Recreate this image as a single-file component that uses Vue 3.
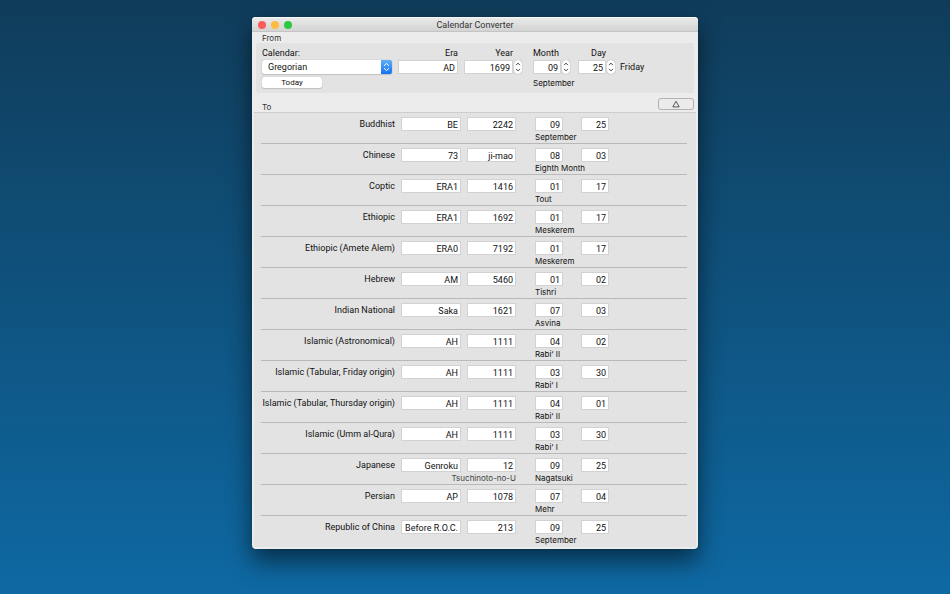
<script setup>
import { computed, ref } from 'vue'

const calendars = ['Gregorian', 'Buddhist', 'Chinese', 'Coptic', 'Hebrew', 'Japanese', 'Persian']
const monthNames = [
  'January', 'February', 'March', 'April', 'May', 'June',
  'July', 'August', 'September', 'October', 'November', 'December',
]
const dayNames = ['Sunday', 'Monday', 'Tuesday', 'Wednesday', 'Thursday', 'Friday', 'Saturday']

const calendar = ref('Gregorian')
const date = ref(new Date(Date.UTC(1699, 8, 25)))

const two = (n) => String(n).padStart(2, '0')
const parts = computed(() => [
  { key: 'year', label: 'Year', value: String(date.value.getUTCFullYear()), note: '' },
  {
    key: 'month',
    label: 'Month',
    value: two(date.value.getUTCMonth() + 1),
    note: monthNames[date.value.getUTCMonth()],
  },
  { key: 'day', label: 'Day', value: two(date.value.getUTCDate()), note: '' },
])
const weekday = computed(() => dayNames[date.value.getUTCDay()])

function step(key, by) {
  const next = new Date(date.value)
  if (key === 'year') next.setUTCFullYear(next.getUTCFullYear() + by)
  if (key === 'month') next.setUTCMonth(next.getUTCMonth() + by)
  if (key === 'day') next.setUTCDate(next.getUTCDate() + by)
  date.value = next
}

function today() {
  date.value = new Date()
}

const expanded = ref(true)

const row = (name, era, year, month, day, monthName, yearName = '') => ({
  name, era, year, month, day, monthName, yearName,
})
const rows = [
  row('Buddhist', 'BE', '2242', '09', '25', 'September'),
  row('Chinese', '73', 'ji-mao', '08', '03', 'Eighth Month'),
  row('Coptic', 'ERA1', '1416', '01', '17', 'Tout'),
  row('Ethiopic', 'ERA1', '1692', '01', '17', 'Meskerem'),
  row('Ethiopic (Amete Alem)', 'ERA0', '7192', '01', '17', 'Meskerem'),
  row('Hebrew', 'AM', '5460', '01', '02', 'Tishri'),
  row('Indian National', 'Saka', '1621', '07', '03', 'Asvina'),
  row('Islamic (Astronomical)', 'AH', '1111', '04', '02', 'Rabiʻ II'),
  row('Islamic (Tabular, Friday origin)', 'AH', '1111', '03', '30', 'Rabiʻ I'),
  row('Islamic (Tabular, Thursday origin)', 'AH', '1111', '04', '01', 'Rabiʻ II'),
  row('Islamic (Umm al-Qura)', 'AH', '1111', '03', '30', 'Rabiʻ I'),
  row('Japanese', 'Genroku', '12', '09', '25', 'Nagatsuki', 'Tsuchinoto-no-U'),
  row('Persian', 'AP', '1078', '07', '04', 'Mehr'),
  row('Republic of China', 'Before R.O.C.', '213', '09', '25', 'September'),
]
</script>

<template>
  <main class="desktop">
    <div class="window">
      <header class="titlebar">
        <div class="lights">
          <button class="light close" aria-label="Close"></button>
          <button class="light minimize" aria-label="Minimize"></button>
          <button class="light zoom" aria-label="Zoom"></button>
        </div>
        <h1 class="title">Calendar Converter</h1>
      </header>

      <section>
        <h2 class="caption">From</h2>
        <div class="source">
          <div class="column">
            <label class="label" for="calendar">Calendar:</label>
            <div class="picker">
              <select id="calendar" v-model="calendar" class="select">
                <option v-for="name in calendars" :key="name">{{ name }}</option>
              </select>
              <span class="picker-knob">
                <svg viewBox="0 0 11 14" width="11" height="14" aria-hidden="true">
                  <path d="M3.4 5.6 5.5 3.3 7.6 5.6M3.4 8.4 5.5 10.7 7.6 8.4" />
                </svg>
              </span>
            </div>
            <button class="today" @click="today">Today</button>
          </div>

          <div class="column">
            <label class="label era-label" for="era">Era</label>
            <input id="era" class="field era" value="AD" />
          </div>

          <div v-for="part in parts" :key="part.key" class="column">
            <label class="label" :class="part.key + '-label'" :for="part.key">{{ part.label }}</label>
            <div class="stepped">
              <input :id="part.key" class="field" :class="part.key" :value="part.value" />
              <span class="stepper">
                <button :aria-label="'Increase ' + part.label" @click="step(part.key, 1)">
                  <svg viewBox="0 0 8 7" width="8" height="7" aria-hidden="true">
                    <path d="M2.3 4.9 4 3.1 5.7 4.9" />
                  </svg>
                </button>
                <button :aria-label="'Decrease ' + part.label" @click="step(part.key, -1)">
                  <svg viewBox="0 0 8 7" width="8" height="7" aria-hidden="true">
                    <path d="M2.3 2.1 4 3.9 5.7 2.1" />
                  </svg>
                </button>
              </span>
            </div>
            <span class="source-note">{{ part.note }}</span>
          </div>

          <output class="weekday">{{ weekday }}</output>
        </div>
      </section>

      <section>
        <div class="target-head">
          <h2 class="caption">To</h2>
          <button class="toggle" aria-label="Collapse list" @click="expanded = !expanded">
            <svg viewBox="0 0 8 8" width="8" height="8" aria-hidden="true">
              <path d="M4 1.2 7.2 6.9H.8Z" />
            </svg>
          </button>
        </div>
        <table v-show="expanded" class="results">
          <tbody>
            <tr v-for="r in rows" :key="r.name" class="result">
              <th scope="row" class="name">{{ r.name }}</th>
              <td><input class="field era" readonly :value="r.era" :aria-label="r.name + ' era'" /></td>
              <td>
                <input class="field year" readonly :value="r.year" :aria-label="r.name + ' year'" />
                <span class="note year-note">{{ r.yearName }}</span>
              </td>
              <td>
                <input class="field month" readonly :value="r.month" :aria-label="r.name + ' month'" />
                <span class="note">{{ r.monthName }}</span>
              </td>
              <td><input class="field day" readonly :value="r.day" :aria-label="r.name + ' day'" /></td>
            </tr>
          </tbody>
        </table>
      </section>
    </div>
  </main>
</template>

<style>
body {
  margin: 0;
}
</style>

<style scoped>
* {
  box-sizing: border-box;
}

.desktop {
  min-height: 100vh;
  padding: 17px 16px 45px;
  background: linear-gradient(#103c5a, #0e69a3);
  font: 9px/14px Roboto, 'Liberation Sans', sans-serif;
  color: #111;
}

.window {
  max-width: 446px;
  margin: 0 auto;
  padding-bottom: 2px;
  border-radius: 4px;
  background: #ececec;
  box-shadow: 0 0 1px rgba(0, 0, 0, 0.5), 0 12px 24px rgba(0, 0, 0, 0.55);
}

button,
input,
select {
  margin: 0;
  padding: 0;
  border: 0;
  font: inherit;
  color: inherit;
}

/* Title bar */
.titlebar {
  display: grid;
  grid-template-columns: 1fr auto 1fr;
  align-items: center;
  height: 15px;
  padding: 1px 6px 0;
  border-bottom: 1px solid #c4c4c4;
  border-radius: 4px 4px 0 0;
  background: linear-gradient(#ebebeb, #d3d3d3);
  box-shadow: inset 0 1px #f6f6f6;
}

.lights {
  display: flex;
  gap: 5px;
}

.light {
  width: 8px;
  height: 8px;
  border-radius: 50%;
}

.close {
  background: #fc5b57;
}

.minimize {
  background: #fdbc40;
}

.zoom {
  background: #2bc840;
}

.title {
  margin: 0;
  font-size: 9px;
  font-weight: 400;
  color: #333;
}

.caption {
  margin: 0;
  padding: 2px 0 0 10px;
  font: 8px/9px Inter, 'Liberation Sans', sans-serif;
  color: #333;
}

/* Source date */
.source {
  display: grid;
  grid-template-columns: 130px 60px 63px 39px 36px 1fr;
  column-gap: 6px;
  margin: 0 4px;
  padding: 3px 6px 4px;
  border-radius: 2px;
  background: #e3e3e3;
}

.column {
  display: flex;
  flex-direction: column;
  align-items: flex-start;
}

.label {
  height: 14px;
  line-height: 14px;
}

.era-label {
  width: 60px;
  text-align: right;
}

.year-label {
  width: 49px;
  text-align: right;
}

.day-label {
  width: 28px;
  text-align: right;
}

.field {
  display: block;
  height: 14px;
  padding: 1px 2px 0;
  border: 1px solid #d2d2d2;
  background: #fff;
  line-height: 12px;
  text-align: right;
}

.era {
  width: 60px;
}

.year {
  width: 49px;
}

.month,
.day {
  width: 28px;
}

.picker {
  position: relative;
  width: 100%;
  height: 14px;
}

.select {
  width: 100%;
  height: 14px;
  padding: 0 14px 0 6px;
  border-radius: 2px;
  appearance: none;
  background: #fff;
  box-shadow: 0 0 1px rgba(0, 0, 0, 0.4), 0 1px 1px rgba(0, 0, 0, 0.12);
}

.picker-knob {
  position: absolute;
  top: 0;
  right: 0;
  display: flex;
  border-radius: 0 2px 2px 0;
  background: linear-gradient(#62aef8, #1272f3);
  pointer-events: none;
}

.picker-knob path {
  fill: none;
  stroke: #fff;
  stroke-width: 1;
  stroke-linecap: round;
  stroke-linejoin: round;
}

.today {
  width: 60px;
  height: 11px;
  margin-top: 3px;
  border-radius: 2px;
  background: #fff;
  box-shadow: 0 0 1px rgba(0, 0, 0, 0.35), 0 1px 1px rgba(0, 0, 0, 0.12);
  font: 8px/11px Roboto, 'Liberation Sans', sans-serif;
}

.stepped {
  display: flex;
  gap: 1px;
}

.stepper {
  display: flex;
  flex-direction: column;
  width: 8px;
  height: 14px;
  border-radius: 4px;
  background: #fff;
  box-shadow: 0 0 1px rgba(0, 0, 0, 0.5);
}

.stepper button {
  display: flex;
  height: 7px;
  background: none;
}

.stepper path {
  fill: none;
  stroke: #444;
  stroke-width: 1;
  stroke-linecap: round;
  stroke-linejoin: round;
}

.source-note {
  padding-top: 3px;
  font: 8px/12px Inter, 'Liberation Sans', sans-serif;
}

.weekday {
  padding-top: 14px;
}

/* Converted dates */
.target-head {
  display: flex;
  align-items: flex-end;
  justify-content: space-between;
  height: 19px;
  padding: 0 4px 0 0;
}

.toggle {
  display: flex;
  align-items: center;
  justify-content: center;
  width: 36px;
  height: 12px;
  margin-bottom: 2px;
  border: 1px solid #b0b0b0;
  border-radius: 3px;
  background: #ebebeb;
}

.toggle path {
  fill: none;
  stroke: #555;
  stroke-width: 1;
}

.results {
  display: block;
  margin: 0 2px;
  padding: 0 9px 0 7px;
  border-top: 1px solid #cdcdcd;
  background: #e3e3e3;
}

.results tbody {
  display: block;
}

.result {
  display: grid;
  grid-template-columns: 134px 60px 62px 40px 28px;
  column-gap: 6px;
  height: 31px;
  padding-top: 4px;
  border-bottom: 1px solid #b9b9b9;
}

.result:last-child {
  border-bottom-color: transparent;
}

.result td {
  padding: 0;
}

.name {
  padding: 0;
  font-weight: 400;
  text-align: right;
  white-space: nowrap;
}

.note {
  display: block;
  font: 8px/12px Inter, 'Liberation Sans', sans-serif;
  white-space: nowrap;
}

.year-note {
  display: flex;
  justify-content: flex-end;
  width: 49px;
  color: #444;
}
</style>
